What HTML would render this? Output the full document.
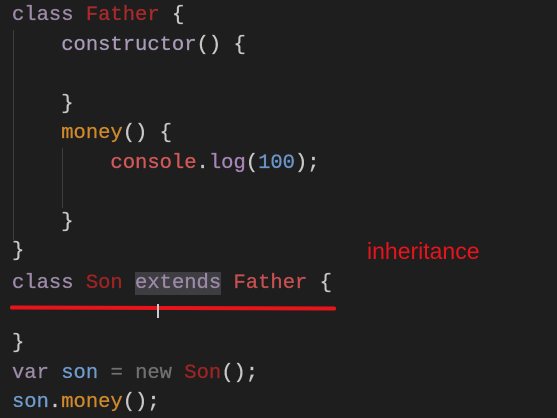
<!DOCTYPE html>
<html><head><style>
body{margin:0;width:557px;height:415px;background:#1e1e1e;overflow:hidden;position:relative}
.l{position:absolute;left:12px;font-family:"Liberation Mono",monospace;font-size:20.5px;line-height:30px;white-space:pre;color:#c8c8c8;-webkit-text-stroke:0.3px currentColor}
.k{color:#9d8aa8}.c{color:#a82a2a}.f{color:#a89ab8}.m{color:#d08a2c}.o{color:#d45858}.g{color:#a884b8}.n{color:#6a96c8}.v{color:#6f9ccf}.w{color:#707070}.s{color:#a02424}
.guide{position:absolute;width:1px;background:#3e3e3e}
</style></head><body>
<div class="guide" style="left:13px;top:30px;height:210px"></div>
<div class="guide" style="left:62px;top:148px;height:60px"></div>
<div class="l" style="top:1px"><span class="k">class</span> <span class="c">Father</span> {</div>
<div class="l" style="top:31px">    <span class="f">constructor</span>() {</div>
<div class="l" style="top:90px">    }</div>
<div class="l" style="top:119px">    <span class="m">money</span>() {</div>
<div class="l" style="top:149px">        <span class="o">console</span>.<span class="g">log</span>(<span class="n">100</span>);</div>
<div class="l" style="top:208px">    }</div>
<div class="l" style="top:237px">}</div>
<div class="l" style="top:269px"><span class="k">class</span> <span class="s">Son</span> <span class="k" style="background:#3d3d42">extends</span> <span class="o" style="color:#c85050">Father</span> {</div>
<div class="l" style="top:329px">}</div>
<div class="l" style="top:359px"><span class="k">var</span> <span class="v">son</span> <span class="w">=</span> <span class="w">new</span> <span class="s">Son</span>();</div>
<div class="l" style="top:388px"><span class="v">son</span>.<span class="m">money</span>();</div>
<div style="position:absolute;left:10px;top:306px;width:326px;height:4px;background:#e8141c;border-radius:2px;transform:rotate(0.2deg)"></div>
<div style="position:absolute;left:157px;top:304px;width:2px;height:14px;background:#ccc"></div>
<div style="position:absolute;left:367px;top:238px;font-family:'Liberation Sans',sans-serif;font-size:23px;color:#e8141c">inheritance</div>
</body></html>
